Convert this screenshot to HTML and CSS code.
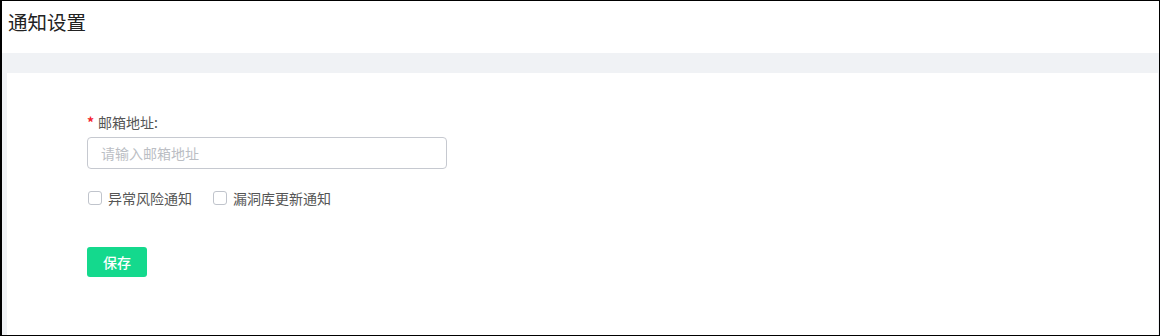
FILE: index.html
```html
<!DOCTYPE html>
<html>
<head>
    <meta charset="utf-8">
    <meta name="viewport" content="width=device-width, initial-scale=1">
    <title>通知设置</title>

    <link rel="stylesheet" href="styles.css">
</head>
<body>
<div class="page">
    <div class="header">通知设置</div>
    <div class="wrap">
        <div class="body">
            <form onsubmit="return false;">
                <label class="label"><span class="star">*</span>邮箱地址:</label>
                <input class="input" type="text" placeholder="请输入邮箱地址">
                <div class="checks">
                    <label class="check"><span class="box"></span>异常风险通知</label>
                    <label class="check"><span class="box"></span>漏洞库更新通知</label>
                </div>
                <button class="btn">保存</button>
            </form>
        </div>
    </div>
</div>
</body>
</html>
```

FILE: styles.css
```css
html, body {
    margin: 0;
    padding: 0;
    background: #fff;
}

body {
    font-family: "Noto Sans CJK SC", "Noto Sans", sans-serif;
}

.page {
    width: 1160px;
    height: 336px;
    box-sizing: border-box;
    border: solid 1px #000;
    border-left-width: 2px;
    display: flex;
    flex-direction: column;
}

.header {
    height: 52px;
    padding-left: 6px;
    line-height: 42px;
    font-size: 19.5px;
    color: #222;
}

.wrap {
    flex: 1;
    background-color: #f0f2f5;
    padding: 20px 1px 0 5px;
    display: flex;
}

.body {
    flex: 1;
    background-color: #fff;
    padding: 39px 80px 0;
}

.label {
    display: block;
    font-size: 14px;
    line-height: 20px;
    color: #555;
}

.star {
    color: #f5222d;
    font-weight: bold;
    margin-right: 4px;
}

.input {
    display: block;
    box-sizing: border-box;
    width: 360px;
    height: 32px;
    margin-top: 5px;
    padding: 0 13px;
    border: solid 1px #c6c9d0;
    border-radius: 4px;
    font-family: inherit;
    font-size: 14px;
    color: #555;
    outline: none;
}

.input::placeholder {
    color: #bbbec4;
}

.checks {
    display: flex;
    gap: 20px;
    margin-top: 19px;
}

.check {
    display: flex;
    align-items: center;
    font-size: 14px;
    line-height: 20px;
    color: #555;
    cursor: pointer;
}

.check .box {
    width: 14px;
    height: 14px;
    box-sizing: border-box;
    border: solid 1px #c0c4cc;
    border-radius: 3px;
    margin: 0 6px 0 1px;
}

.btn {
    display: block;
    margin-top: 39px;
    width: 60px;
    height: 30px;
    border: none;
    border-radius: 3px;
    background-color: #14d98d;
    color: #fff;
    font-family: inherit;
    font-size: 14px;
    font-weight: 500;
    cursor: pointer;
}
```
